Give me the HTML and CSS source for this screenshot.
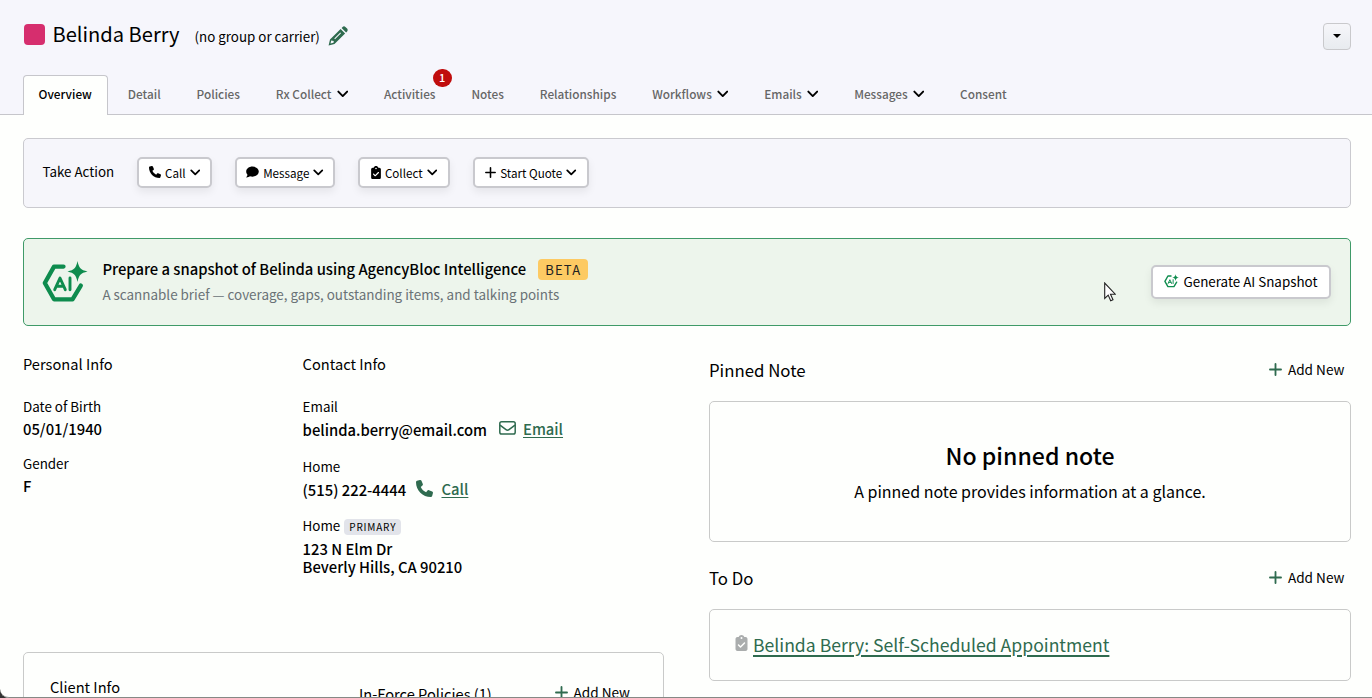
FILE: index.html
```
<!DOCTYPE html>
<html lang="en">
<head>
  <meta charset="UTF-8">
  <meta name="viewport" content="width=device-width, initial-scale=1.0">
  <title>Belinda Berry - Overview</title>
  <link rel="stylesheet" href="styles.css">
</head>
<body>
  <!-- shared icons -->
  <svg class="sprite" width="0" height="0">
    <symbol id="chevron" viewBox="0 0 12 8">
      <path d="M1.4 1.5 6 6.2l4.6-4.7" fill="none" stroke="currentColor" stroke-width="2" stroke-linecap="round" stroke-linejoin="round"/>
    </symbol>
    <symbol id="phone" viewBox="0 0 512 512">
      <path fill="currentColor" d="M164.900 24.600c-7.700-18.600-28-28.500-47.400-23.200l-88 24C12.100 30.200 0 46 0 64c0 247.400 200.600 448 448 448 18 0 33.800-12.100 38.600-29.500l24-88c5.300-19.400-4.600-39.700-23.200-47.400l-96-40c-16.300-6.800-35.200-2.100-46.300 11.600L304.700 368C234.300 334.700 177.300 277.700 144 207.300L193.300 167c13.700-11.200 18.400-30 11.600-46.300z"/>
    </symbol>
    <symbol id="plus" viewBox="0 0 12 12">
      <path d="M6 .9v10.200M.9 6h10.200" fill="none" stroke="currentColor" stroke-width="1.7" stroke-linecap="round"/>
    </symbol>
    <symbol id="clipboard" viewBox="0 0 384 512">
      <path fill="currentColor" fill-rule="evenodd" d="M192 0c-41.800 0-77.400 26.700-90.500 64H64C28.700 64 0 92.700 0 128v320c0 35.300 28.700 64 64 64h256c35.300 0 64-28.700 64-64V128c0-35.300-28.700-64-64-64h-37.500C269.400 26.700 233.800 0 192 0zm0 64a32 32 0 1 1 0 64 32 32 0 1 1 0-64zm113 209L177 401c-9.400 9.400-24.600 9.400-33.900 0l-64-64c-9.400-9.400-9.400-24.600 0-33.900s24.600-9.400 33.900 0l47 47L271 239c9.400-9.400 24.600-9.400 33.900 0s9.400 24.600 0 34z"/>
    </symbol>
    <symbol id="ai" viewBox="0 0 46 42">
      <g fill="none" stroke="currentColor" stroke-linecap="round" stroke-linejoin="round">
        <path stroke-width="4.300" d="M21.500 5.600H12L2.800 22 12 38.300H30.500L38.800 24.600"/>
        <path stroke-width="2.900" d="M12.700 28.700 18 17 23.300 28.700M14.700 25.300H21.300M28 17V28.700"/>
      </g>
      <path fill="currentColor" d="M35.500 0C37 7 38.500 8.800 45.500 10.500 38.500 12.200 37 14 35.500 21 34 14 32.500 12.200 25.500 10.500 32.500 8.800 34 7 35.500 0z"/>
    </symbol>
  </svg>

  <header class="page-header">
    <div class="title-row">
      <span class="swatch"></span>
      <h1>Belinda Berry</h1>
      <span class="carrier">(no group or carrier)</span>
      <svg class="pencil" viewBox="0 0 20 20" width="20" height="20">
        <path fill="currentColor" fill-rule="evenodd" d="M13.600 1.900l1-1c.8-.8 2-.8 2.800 0l1.700 1.700c.8.800.8 2 0 2.800l-1 1zM12.600 2.900l4.500 4.500L6.500 18 .6 19.400 2 13.500zM3.200 14.400l-.7 3 3-.7.300-1.700-1.300-.3zM6.300 12.600l.7.700 6-6-.7-.7z"/>
      </svg>
      <button class="menu-btn"><span class="caret"></span></button>
    </div>
    <nav class="tabs">
      <a class="tab active">Overview</a>
      <a class="tab">Detail</a>
      <a class="tab">Policies</a>
      <a class="tab">Rx Collect <svg class="chev"><use href="#chevron"/></svg></a>
      <a class="tab">Activities<span class="count">1</span></a>
      <a class="tab">Notes</a>
      <a class="tab">Relationships</a>
      <a class="tab">Workflows <svg class="chev"><use href="#chevron"/></svg></a>
      <a class="tab">Emails <svg class="chev"><use href="#chevron"/></svg></a>
      <a class="tab">Messages <svg class="chev"><use href="#chevron"/></svg></a>
      <a class="tab">Consent</a>
    </nav>
  </header>

  <main>
    <section class="actions">
      <span class="actions-label">Take Action</span>
      <button class="btn call"><svg class="i-phone"><use href="#phone"/></svg>Call<svg class="chev"><use href="#chevron"/></svg></button>
      <button class="btn message">
        <svg class="i-chat" viewBox="0 0 13 12"><path fill="currentColor" d="M6.500.5C3 .5.200 2.700.200 5.600c0 1.200.5 2.300 1.300 3.200C1.300 10 .7 10.800.200 11.400c1.500.1 2.800-.4 3.700-1.100.8.300 1.700.4 2.600.4 3.500 0 6.300-2.200 6.300-5.100S10 .5 6.500.5z"/></svg>Message<svg class="chev"><use href="#chevron"/></svg>
      </button>
      <button class="btn collect"><svg class="i-clip"><use href="#clipboard"/></svg>Collect<svg class="chev"><use href="#chevron"/></svg></button>
      <button class="btn quote"><svg class="i-plus"><use href="#plus"/></svg>Start Quote<svg class="chev"><use href="#chevron"/></svg></button>
    </section>

    <section class="ai-panel">
      <svg class="ai-logo"><use href="#ai"/></svg>
      <div class="ai-text">
        <div class="ai-title">Prepare a snapshot of Belinda using AgencyBloc Intelligence<span class="beta">BETA</span></div>
        <div class="ai-sub">A scannable brief — coverage, gaps, outstanding items, and talking points</div>
      </div>
      <button class="btn generate"><svg class="i-ai"><use href="#ai"/></svg>Generate AI Snapshot</button>
    </section>

    <div class="columns">
      <div class="left">
        <div class="info">
          <section class="info-col">
            <h2>Personal Info</h2>
            <dl>
              <dt>Date of Birth</dt>
              <dd>05/01/1940</dd>
              <dt>Gender</dt>
              <dd>F</dd>
            </dl>
          </section>
          <section class="info-col contact">
            <h2>Contact Info</h2>
            <dl>
              <dt>Email</dt>
              <dd>belinda.berry@email.com
                <svg class="i-mail" viewBox="0 0 17 14"><g fill="none" stroke="currentColor" stroke-width="1.500" stroke-linejoin="round"><rect x=".8" y=".8" width="15.400" height="12.200" rx="1.800"/><path d="M1 4.200l6 4.500c.9.700 2.100.7 3 0l6-4.500"/></g></svg>
                <a class="link">Email</a></dd>
              <dt>Home</dt>
              <dd>(515) 222-4444
                <svg class="i-tel"><use href="#phone"/></svg>
                <a class="link">Call</a></dd>
              <dt>Home <span class="primary">PRIMARY</span></dt>
              <dd class="address">123 N Elm Dr<br>Beverly Hills, CA 90210</dd>
            </dl>
          </section>
        </div>
        <section class="card client">
          <h2>Client Info</h2>
          <h2 class="policies">In-Force Policies (1)</h2>
          <a class="add"><svg><use href="#plus"/></svg>Add New</a>
        </section>
      </div>

      <div class="right">
        <div class="section-head">
          <h3>Pinned Note</h3>
          <a class="add"><svg><use href="#plus"/></svg>Add New</a>
        </div>
        <section class="card pinned">
          <h4>No pinned note</h4>
          <p>A pinned note provides information at a glance.</p>
        </section>
        <div class="section-head">
          <h3>To Do</h3>
          <a class="add"><svg><use href="#plus"/></svg>Add New</a>
        </div>
        <section class="card todo">
          <svg class="i-task"><use href="#clipboard"/></svg>
          <a class="todo-link">Belinda Berry: Self-Scheduled Appointment</a>
        </section>
      </div>
    </div>
  </main>

  <svg class="pointer" viewBox="0 0 12 20"><path d="M.7 1v15.400l3.500-3.300 2.500 5.600 2.300-1-2.500-5.500h4.800z" fill="#fff" stroke="#222" stroke-width="1.100"/></svg>
  <div class="window-edge"></div>
</body>
</html>
```
FILE: styles.css
```
* {
  box-sizing: border-box;
}
body {
  margin: 0;
  height: 698px;
  overflow: hidden;
  background: #fefffd;
  color: #000;
  font-family: "Noto Sans CJK SC", "Open Sans", sans-serif;
  font-size: 13.4px;
}
h1, h2, h3, h4, p, dl, dd {
  margin: 0;
  font-weight: 400;
}
svg {
  flex: none;
}
button {
  font-family: inherit;
  color: inherit;
}
.sprite {
  position: absolute;
}

/* header */
.page-header {
  height: 115px;
  padding: 0 21px 0 23px;
  background: #f6f6fc;
  border-bottom: 1px solid #c6c6cb;
  display: flex;
  flex-direction: column;
  justify-content: space-between;
}
.title-row {
  display: flex;
  align-items: center;
  height: 72px;
}
.swatch {
  width: 21px;
  height: 21px;
  margin: 0 7.5px 4px 1px;
  border-radius: 4px;
  background: #d62e6e;
}
h1 {
  font-size: 20.1px;
  line-height: 24px;
  padding-bottom: 5px;
}
.carrier {
  font-size: 13.35px;
  line-height: 20px;
  margin-left: 15px;
  padding-top: 2px;
}
.pencil {
  margin-left: 8px;
  color: #2f6b4f;
}
.menu-btn {
  margin-left: auto;
  width: 28px;
  height: 27px;
  padding: 0;
  border: 1px solid #c9c9cc;
  border-radius: 4px;
  background: linear-gradient(#f6f6fa, #e8ebef);
  display: flex;
  align-items: center;
  justify-content: center;
}
.caret {
  border: 4px solid transparent;
  border-top-color: #000;
  border-bottom: 0;
}
.tabs {
  display: flex;
  margin-bottom: -1px;
}
.tab {
  position: relative;
  display: flex;
  align-items: center;
  height: 40px;
  padding: 0 15px 4px 14.6px;
  margin-right: 4.3px;
  border: 1px solid transparent;
  border-bottom: 0;
  border-radius: 4px 4px 0 0;
  font-size: 11.8px;
  font-weight: 500;
  color: #666;
}
.tab.active {
  background: #fefffd;
  border-color: #c6c6cb;
  color: #000;
}
.chev {
  width: 11.5px;
  height: 8px;
  margin-left: 5px;
  color: #000;
}
.count {
  position: absolute;
  right: -1px;
  top: -7px;
  width: 19px;
  height: 18px;
  border-radius: 9px;
  background: #c00d0d;
  color: #fff;
  font-size: 11px;
  line-height: 17px;
  text-align: center;
}

/* action bar */
main {
  padding: 23px 21px 0 23px;
}
.actions {
  display: flex;
  align-items: center;
  height: 70px;
  padding: 0 0 2px 18.5px;
  border: 1px solid #cacacf;
  border-radius: 5px;
  background: #f6f6fb;
}
.actions-label {
  width: 94.5px;
  font-size: 13.35px;
  line-height: 20px;
  padding-bottom: 1px;
}
.btn {
  display: flex;
  align-items: center;
  justify-content: center;
  height: 31px;
  margin-right: 23px;
  padding: 0;
  border: 2px solid #c9c9ce;
  border-radius: 5px;
  background: #fff;
  font-size: 11.65px;
  box-shadow: 0 4px 8px rgba(0, 0, 0, 0.07);
}
.btn svg:first-child {
  margin-right: 4px;
}
.call { width: 75px; }
.message { width: 100px; }
.collect { width: 92px; }
.quote { width: 116px; }
.btn .chev {
  width: 10.5px;
  height: 7px;
  margin-left: 4px;
}
.i-phone {
  width: 12px;
  height: 12px;
}
.i-chat {
  width: 13px;
  height: 12px;
}
.i-clip {
  width: 10px;
  height: 13px;
}
.i-plus {
  width: 11px;
  height: 11px;
}

/* AI banner */
.ai-panel {
  display: flex;
  align-items: center;
  height: 88px;
  margin-top: 30px;
  padding: 0 19px 0 18px;
  border: 1px solid #3f9a68;
  border-radius: 5px;
  background: #edf5ec;
}
.ai-logo {
  width: 46px;
  height: 42px;
  color: #0e8c4e;
}
.ai-text {
  flex: 1;
  margin-left: 14.4px;
}
.ai-title {
  display: flex;
  align-items: center;
  font-size: 14.82px;
  font-weight: 500;
  line-height: 24px;
  padding-top: 1px;
}
.beta {
  height: 21px;
  margin-left: 12px;
  padding: 0 7px;
  border-radius: 4px;
  background: #fdca63;
  font-size: 13px;
  font-weight: 400;
  line-height: 21px;
  letter-spacing: 1.2px;
  color: #222;
}
.ai-sub {
  font-size: 13.43px;
  line-height: 20px;
  padding-top: 3px;
  color: #6a7276;
  height: 27px;
}
.generate {
  width: 180px;
  height: 34px;
  margin: 0;
  padding-bottom: 2px;
  font-size: 13.4px;
}
.i-ai {
  width: 15px;
  height: 14px;
  color: #0e8c4e;
}

/* main columns */
.columns {
  display: flex;
  justify-content: space-between;
  height: 372px;
  overflow: hidden;
}
.left {
  width: 641px;
}
.right {
  width: 642px;
}
.info {
  display: flex;
  height: 326px;
  padding-top: 27px;
}
.info-col {
  width: 279.6px;
}
.contact {
  width: 361px;
}
h2 {
  font-size: 14.65px;
  line-height: 22px;
}
dl {
  margin-top: 21px;
}
dt {
  display: flex;
  align-items: center;
  height: 20px;
}
dd {
  display: flex;
  align-items: center;
  height: 25px;
  margin-bottom: 12px;
  font-size: 14.8px;
  font-weight: 500;
}
.contact dd {
  height: 26px;
  margin-bottom: 14px;
}
.contact dd + dt:last-of-type {
  margin-top: -1px;
}
.contact dd.address {
  display: block;
  height: auto;
  padding-top: 5px;
  line-height: 18px;
}
.link {
  font-size: 14.8px;
  color: #2f6b4f;
  text-decoration: underline;
  text-underline-offset: 2px;
  text-decoration-thickness: 1px;
  padding-bottom: 2px;
}
.i-mail {
  width: 17px;
  height: 14px;
  margin: 0 7px 2px 12px;
  color: #2f6b4f;
}
.i-tel {
  width: 17px;
  height: 17px;
  margin: 0 8px 2px 10.4px;
  color: #2f6b4f;
}
.primary {
  height: 16px;
  margin: 3px 0 0 4px;
  padding: 0 5px;
  border-radius: 4px;
  background: #e2e4ea;
  font-size: 10px;
  line-height: 15px;
  letter-spacing: 0.8px;
}

/* cards */
.card {
  border: 1px solid #c9cac9;
  border-radius: 5px;
}
.client {
  display: flex;
  align-items: flex-start;
  height: 200px;
  padding: 23px 33px 0 26px;
}
.policies {
  margin: 7px auto 0 239px;
}
.client .add {
  margin-top: 6px;
}
.add {
  display: flex;
  align-items: center;
  line-height: 20px;
  font-size: 13.6px;
}
.add svg {
  width: 13px;
  height: 13px;
  margin-right: 6px;
  color: #2f6b4f;
}
.section-head {
  display: flex;
  align-items: flex-start;
  justify-content: space-between;
  height: 75px;
  padding: 32px 7px 0 0;
}
h3 {
  font-size: 16.8px;
  line-height: 24px;
}
.section-head .add {
  margin-right: -0.4px;
  padding-top: 1px;
}
.pinned {
  height: 141px;
  padding-top: 37px;
  text-align: center;
}
.pinned + .section-head {
  height: 67px;
  padding-top: 24px;
}
h4 {
  font-size: 23.1px;
  font-weight: 500;
  line-height: 32px;
}
.pinned p {
  font-size: 16px;
  line-height: 24px;
  margin-top: 8px;
}
.todo {
  display: flex;
  align-items: center;
  height: 72px;
  padding: 0 0 2px 25px;
}
.i-task {
  width: 13px;
  height: 16px;
  margin: 0 5px 2px 0;
  color: #aaadad;
}
.todo-link {
  font-size: 17.6px;
  color: #2f6b4f;
  text-decoration: underline;
  text-underline-offset: 3px;
  text-decoration-thickness: 2px;
}

/* mouse pointer and window edge */
.pointer {
  position: absolute;
  left: 1104px;
  top: 282px;
  width: 12px;
  height: 20px;
}
.window-edge {
  position: absolute;
  left: 0;
  top: 600px;
  width: 1372px;
  height: 98px;
  border-bottom: 1px solid #858985;
  border-bottom-left-radius: 9px;
  box-shadow: -9px 9px 0 #333;
  clip-path: inset(0);
  pointer-events: none;
}
```
